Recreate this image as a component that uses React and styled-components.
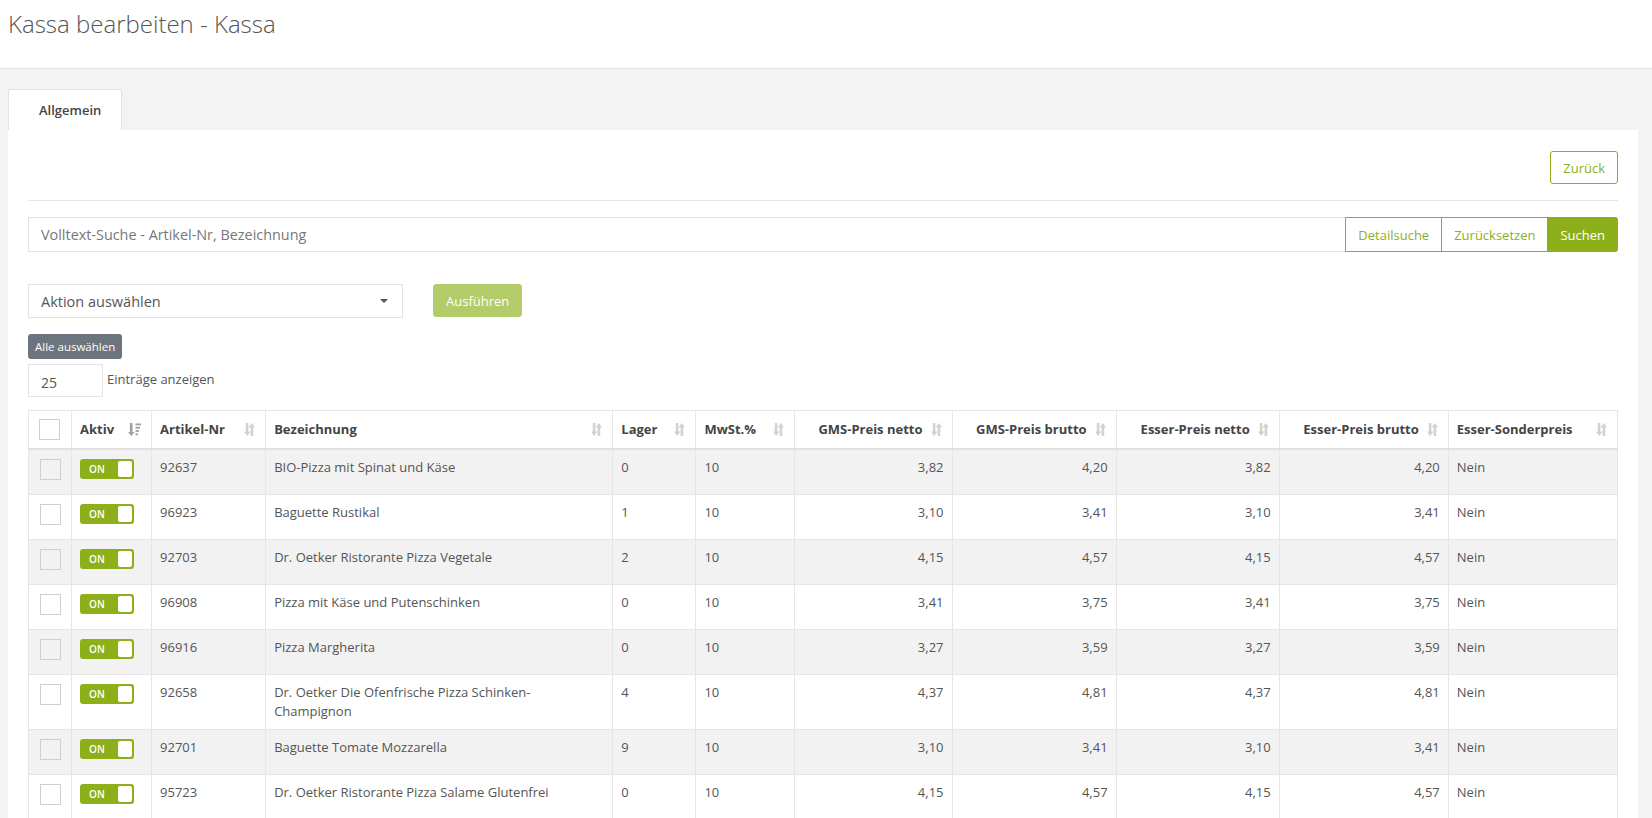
import React from "react";
import styled, { createGlobalStyle } from "styled-components";

const GREEN = "#8db01a";
const LINE = "#e6e6e6";

const GlobalStyle = createGlobalStyle`
  html, body { margin: 0; padding: 0; }
  body {
    background: #f3f3f3;
    font-family: "Open Sans", "Noto Sans", "Liberation Sans", sans-serif;
    color: #555;
    overflow: hidden;
  }
  * { box-sizing: border-box; }
`;

const PageHeader = styled.header`
  background: #fff;
  height: 69px;
  border-bottom: 1px solid #e4e4e4;
  padding: 7px 8px 0;
`;

const Title = styled.h1`
  margin: 0;
  font-size: 24px;
  font-weight: 300;
  line-height: 34px;
  color: #555;
`;

const Main = styled.main`
  padding: 20px 14px 0 8px;
`;

const TabBar = styled.div`
  display: flex;
`;

const Tab = styled.div`
  background: #fff;
  border: 1px solid #e2e2e2;
  border-bottom: none;
  border-radius: 3px 3px 0 0;
  height: 41px;
  padding: 0 20px 0 30px;
  font-size: 13px;
  font-weight: 600;
  color: #444;
  line-height: 41px;
`;

const Panel = styled.section`
  background: #fff;
  padding: 21px 20px 20px;
`;

const TopActions = styled.div`
  display: flex;
  justify-content: flex-end;
`;

const OutlineButton = styled.button`
  height: 33px;
  padding: 0 12px;
  font-family: inherit;
  font-size: 13px;
  color: ${GREEN};
  background: #fff;
  border: 1px solid ${GREEN};
  border-radius: 3px;
`;

const Divider = styled.hr`
  border: none;
  border-top: 1px solid #e5e5e5;
  margin: 16px 0;
`;

const SearchRow = styled.div`
  display: flex;
  height: 35px;
`;

const SearchInput = styled.div`
  flex: 1;
  border: 1px solid #e3e3e3;
  border-right: none;
  padding: 0 12px;
  font-size: 14.4px;
  line-height: 33px;
  color: #777;
`;

const GroupButton = styled.button`
  height: 35px;
  padding: 0 12px;
  font-family: inherit;
  font-size: 13px;
  color: ${(p) => (p.$primary ? "#fff" : GREEN)};
  background: ${(p) => (p.$primary ? GREEN : "#fff")};
  border: 1px solid ${GREEN};
  border-left: ${(p) => (p.$first ? `1px solid ${GREEN}` : "none")};
  border-radius: ${(p) => (p.$last ? "0 3px 3px 0" : "0")};
`;

const ActionRow = styled.div`
  display: flex;
  align-items: flex-start;
  gap: 30px;
  margin-top: 32px;
`;

const SelectBox = styled.div`
  width: 375px;
  height: 34px;
  border: 1px solid #e3e3e3;
  padding: 0 12px;
  display: flex;
  align-items: center;
  justify-content: space-between;
  font-size: 14.5px;
  color: #555;
`;

const Caret = styled.span`
  width: 0;
  height: 0;
  border-left: 4px solid transparent;
  border-right: 4px solid transparent;
  border-top: 4px solid #555;
  margin-right: 2px;
`;

const SolidButton = styled.button`
  height: 33px;
  padding: 0 12px;
  font-family: inherit;
  font-size: 13px;
  color: #fff;
  background: ${GREEN};
  opacity: 0.65;
  border: 1px solid ${GREEN};
  border-radius: 3px;
`;

const SmallGrayButton = styled.button`
  display: block;
  margin-top: 16px;
  height: 25px;
  padding: 0 7px;
  font-family: inherit;
  font-size: 11.5px;
  color: #fff;
  background: #6c757d;
  border: none;
  border-radius: 3px;
`;

const LengthRow = styled.div`
  display: flex;
  align-items: center;
  gap: 4px;
  margin-top: 5px;
  height: 33px;
  font-size: 13px;
  color: #555;
`;

const LengthInput = styled.div`
  width: 75px;
  height: 33px;
  border: 1px solid #e3e3e3;
  padding: 0 12px;
  font-size: 14px;
  line-height: 35px;
  color: #555;
`;

const LengthLabel = styled.span`
  margin-bottom: 3px;
`;

const Table = styled.table`
  margin-top: 13px;
  width: 100%;
  table-layout: fixed;
  border-collapse: collapse;
  border: 1px solid ${LINE};
  font-size: 13px;
  color: #555;
`;

const Col = styled.col`
  width: ${(p) => p.$w}px;
`;

const Th = styled.th`
  padding: 8px 10px 8px 8px;
  border-left: 1px solid ${LINE};
  border-bottom: 2px solid #e0e0e0;
  font-weight: 700;
  color: #444;
  line-height: 19px;
  vertical-align: middle;
  text-align: left;
  white-space: nowrap;
`;

const ThInner = styled.div`
  display: flex;
  align-items: center;
  gap: 8px;
  justify-content: ${(p) => (p.$right ? "flex-end" : "space-between")};
`;

const Tr = styled.tr`
  background: ${(p) => (p.$striped ? "#f2f2f2" : "#fff")};
  border-top: 1px solid ${LINE};
`;

const Td = styled.td`
  padding: 8px;
  border-left: 1px solid ${LINE};
  line-height: 19px;
  vertical-align: top;
  text-align: ${(p) => (p.$right ? "right" : "left")};
`;

const Checkbox = styled.span`
  display: block;
  width: 21px;
  height: 21px;
  margin: ${(p) => (p.$head ? "0 auto" : "1px auto 0")};
  border: 1px solid #cfcfcf;
  background: transparent;
`;

const SwitchCell = styled.div`
  height: 28px;
  padding-top: 1px;
`;

const Switch = styled.div`
  width: 54px;
  height: 20px;
  border-radius: 3px;
  background: ${GREEN};
  display: flex;
  align-items: center;
  padding: 2px;
`;

const SwitchLabel = styled.span`
  flex: 1;
  padding-left: 7px;
  font-size: 10px;
  font-weight: 600;
  color: #fff;
  line-height: 16px;
`;

const SwitchKnob = styled.span`
  width: 14px;
  height: 16px;
  background: #fff;
  border-radius: 2px;
`;

const SortBoth = () => (
  <svg width="11" height="13" viewBox="0 0 11 13">
    <path d="M1.8 0h2.6v8.6h2.1L3.1 13 0 8.6h1.8z" fill="#d2d2d2" />
    <path d="M6.6 13h2.6V4.4H11L7.9 0 4.5 4.4h2.1z" fill="#d2d2d2" />
  </svg>
);

const SortActive = () => (
  <svg width="13" height="13" viewBox="0 0 13 13">
    <path d="M1.9 0h2.6v9h2.1L3.2 13 0 9h1.9z" fill="#a0a0a0" />
    <rect x="7.5" y="0.5" width="5.5" height="1.8" fill="#a0a0a0" />
    <rect x="7.5" y="3.8" width="4.5" height="1.8" fill="#a0a0a0" />
    <rect x="7.5" y="7.1" width="3.5" height="1.8" fill="#a0a0a0" />
    <rect x="7.5" y="10.4" width="2.5" height="1.8" fill="#a0a0a0" />
  </svg>
);

const columns = [
  { key: "chk", w: 43 },
  { key: "aktiv", w: 80, label: "Aktiv", active: true },
  { key: "nr", w: 114, label: "Artikel-Nr" },
  { key: "name", w: 347, label: "Bezeichnung" },
  { key: "lager", w: 83, label: "Lager" },
  { key: "mwst", w: 99, label: "MwSt.%" },
  { key: "gn", w: 157, label: "GMS-Preis netto", right: true },
  { key: "gb", w: 164, label: "GMS-Preis brutto", right: true },
  { key: "en", w: 163, label: "Esser-Preis netto", right: true },
  { key: "eb", w: 169, label: "Esser-Preis brutto", right: true },
  { key: "sp", w: 169, label: "Esser-Sonderpreis" },
];

const rows = [
  ["92637", "BIO-Pizza mit Spinat und Käse", "0", "10", "3,82", "4,20", "3,82", "4,20"],
  ["96923", "Baguette Rustikal", "1", "10", "3,10", "3,41", "3,10", "3,41"],
  ["92703", "Dr. Oetker Ristorante Pizza Vegetale", "2", "10", "4,15", "4,57", "4,15", "4,57"],
  ["96908", "Pizza mit Käse und Putenschinken", "0", "10", "3,41", "3,75", "3,41", "3,75"],
  ["96916", "Pizza Margherita", "0", "10", "3,27", "3,59", "3,27", "3,59"],
  ["92658", "Dr. Oetker Die Ofenfrische Pizza Schinken-Champignon", "4", "10", "4,37", "4,81", "4,37", "4,81"],
  ["92701", "Baguette Tomate Mozzarella", "9", "10", "3,10", "3,41", "3,10", "3,41"],
  ["95723", "Dr. Oetker Ristorante Pizza Salame Glutenfrei", "0", "10", "4,15", "4,57", "4,15", "4,57"],
];

export default function App() {
  return (
    <>
      <GlobalStyle />
      <PageHeader>
        <Title>Kassa bearbeiten - Kassa</Title>
      </PageHeader>
      <Main>
        <TabBar>
          <Tab>Allgemein</Tab>
        </TabBar>
        <Panel>
          <TopActions>
            <OutlineButton>Zurück</OutlineButton>
          </TopActions>
          <Divider />
          <SearchRow>
            <SearchInput>Volltext-Suche - Artikel-Nr, Bezeichnung</SearchInput>
            <GroupButton $first>Detailsuche</GroupButton>
            <GroupButton>Zurücksetzen</GroupButton>
            <GroupButton $primary $last>Suchen</GroupButton>
          </SearchRow>
          <ActionRow>
            <SelectBox>
              <span>Aktion auswählen</span>
              <Caret />
            </SelectBox>
            <SolidButton>Ausführen</SolidButton>
          </ActionRow>
          <SmallGrayButton>Alle auswählen</SmallGrayButton>
          <LengthRow>
            <LengthInput>25</LengthInput>
            <LengthLabel>Einträge anzeigen</LengthLabel>
          </LengthRow>
          <Table>
            <colgroup>
              {columns.map((c) => (
                <Col key={c.key} $w={c.w} />
              ))}
            </colgroup>
            <thead>
              <tr>
                {columns.map((c) =>
                  c.key === "chk" ? (
                    <Th key={c.key}>
                      <Checkbox $head />
                    </Th>
                  ) : (
                    <Th key={c.key}>
                      <ThInner $right={c.right}>
                        <span>{c.label}</span>
                        {c.active ? <SortActive /> : <SortBoth />}
                      </ThInner>
                    </Th>
                  )
                )}
              </tr>
            </thead>
            <tbody>
              {rows.map((r, i) => (
                <Tr key={r[0]} $striped={i % 2 === 0}>
                  <Td>
                    <Checkbox />
                  </Td>
                  <Td>
                    <SwitchCell>
                      <Switch>
                        <SwitchLabel>ON</SwitchLabel>
                        <SwitchKnob />
                      </Switch>
                    </SwitchCell>
                  </Td>
                  <Td>{r[0]}</Td>
                  <Td>{r[1]}</Td>
                  <Td>{r[2]}</Td>
                  <Td>{r[3]}</Td>
                  <Td $right>{r[4]}</Td>
                  <Td $right>{r[5]}</Td>
                  <Td $right>{r[6]}</Td>
                  <Td $right>{r[7]}</Td>
                  <Td>Nein</Td>
                </Tr>
              ))}
            </tbody>
          </Table>
        </Panel>
      </Main>
    </>
  );
}
